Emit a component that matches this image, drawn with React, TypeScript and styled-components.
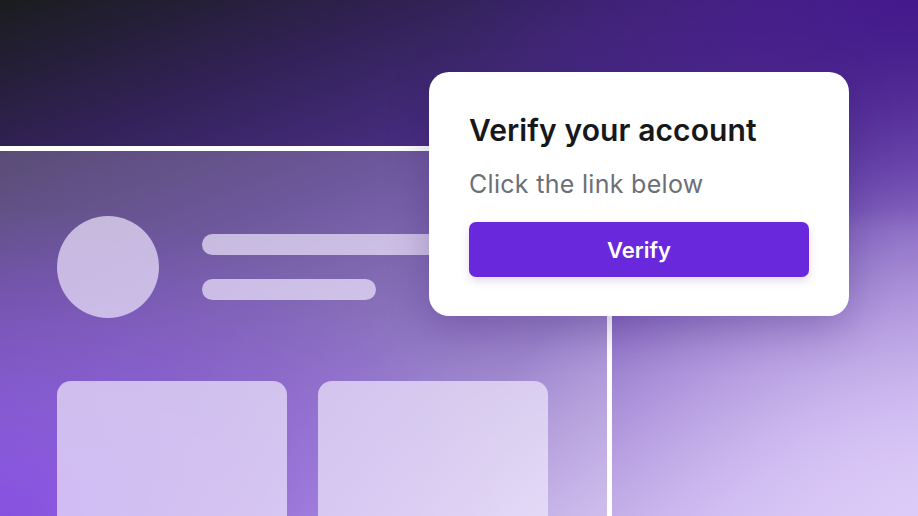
import styled, { createGlobalStyle } from "styled-components";

const GlobalStyle = createGlobalStyle`
  * {
    box-sizing: border-box;
  }
  body {
    margin: 0;
    font-family: Inter, "Liberation Sans", sans-serif;
    background: #1b1c1e;
  }
`;

export default function App() {
  return (
    <>
      <GlobalStyle />
      <Stage>
        <Window>
          <ProfileRow>
            <Avatar />
            <Lines>
              <Line width={300} />
              <Line width={174} />
            </Lines>
          </ProfileRow>
          <Tiles>
            <Tile />
            <Tile />
          </Tiles>
        </Window>

        <Popup>
          <Title>Verify your account</Title>
          <Subtitle>Click the link below</Subtitle>
          <VerifyButton>Verify</VerifyButton>
        </Popup>
      </Stage>
    </>
  );
}

const Stage = styled.div`
  position: relative;
  width: 918px;
  height: 516px;
  overflow: hidden;
  padding-top: 146px;
  background:
    radial-gradient(50% 60% at 100% 100%, #dccaf8 0%, rgba(220, 202, 248, 0) 100%),
    radial-gradient(55% 60% at 0% 100%, #6a26da 0%, rgba(106, 38, 218, 0) 100%),
    radial-gradient(50% 45% at 100% 0%, #44188c 0%, rgba(68, 24, 140, 0) 100%),
    linear-gradient(160deg, #1a1c1e 0%, #33225a 20%, #4a2e84 36%, #7656b6 58%, #a286d4 78%, #d8c6f6 100%);
`;

const Window = styled.div`
  width: 612px;
  height: 370px;
  border-top: 5px solid #ffffff;
  border-right: 5px solid #ffffff;
  background: rgba(255, 255, 255, 0.2);
  padding: 65px 0 0 57px;
  display: flex;
  flex-direction: column;
  gap: 63px;
`;

const ProfileRow = styled.div`
  display: flex;
  align-items: center;
  gap: 43px;
`;

const Avatar = styled.div`
  width: 102px;
  height: 102px;
  border-radius: 50%;
  background: rgba(238, 230, 252, 0.7);
  flex-shrink: 0;
`;

const Lines = styled.div`
  display: flex;
  flex-direction: column;
  gap: 24px;
`;

const Line = styled.div<{ width: number }>`
  width: ${(p) => p.width}px;
  height: 21px;
  border-radius: 11px;
  background: rgba(238, 230, 252, 0.7);
`;

const Tiles = styled.div`
  display: flex;
  gap: 31px;
`;

const Tile = styled.div`
  width: 230px;
  height: 200px;
  border-radius: 14px;
  background: rgba(240, 232, 252, 0.7);
`;

const Popup = styled.div`
  position: absolute;
  left: 429px;
  top: 72px;
  width: 420px;
  padding: 40px 40px 39px;
  background: #ffffff;
  border-radius: 20px;
  box-shadow: 0 12px 40px rgba(40, 12, 90, 0.25);
  display: flex;
  flex-direction: column;
`;

const Title = styled.h2`
  margin: 0;
  font-size: 30px;
  line-height: 36px;
  font-weight: 600;
  letter-spacing: 0.1px;
  color: #16181a;
`;

const Subtitle = styled.p`
  margin: 21px 0 0;
  font-size: 25px;
  line-height: 30px;
  font-weight: 400;
  letter-spacing: 0.3px;
  color: #6c6f78;
`;

const VerifyButton = styled.button`
  margin-top: 23px;
  height: 55px;
  width: 100%;
  border: none;
  border-radius: 7px;
  background: #6a28dd;
  color: #ffffff;
  font-family: Inter, "Liberation Sans", sans-serif;
  font-size: 22px;
  font-weight: 600;
  box-shadow: 0 4px 10px rgba(60, 20, 130, 0.15);
  cursor: pointer;
`;
